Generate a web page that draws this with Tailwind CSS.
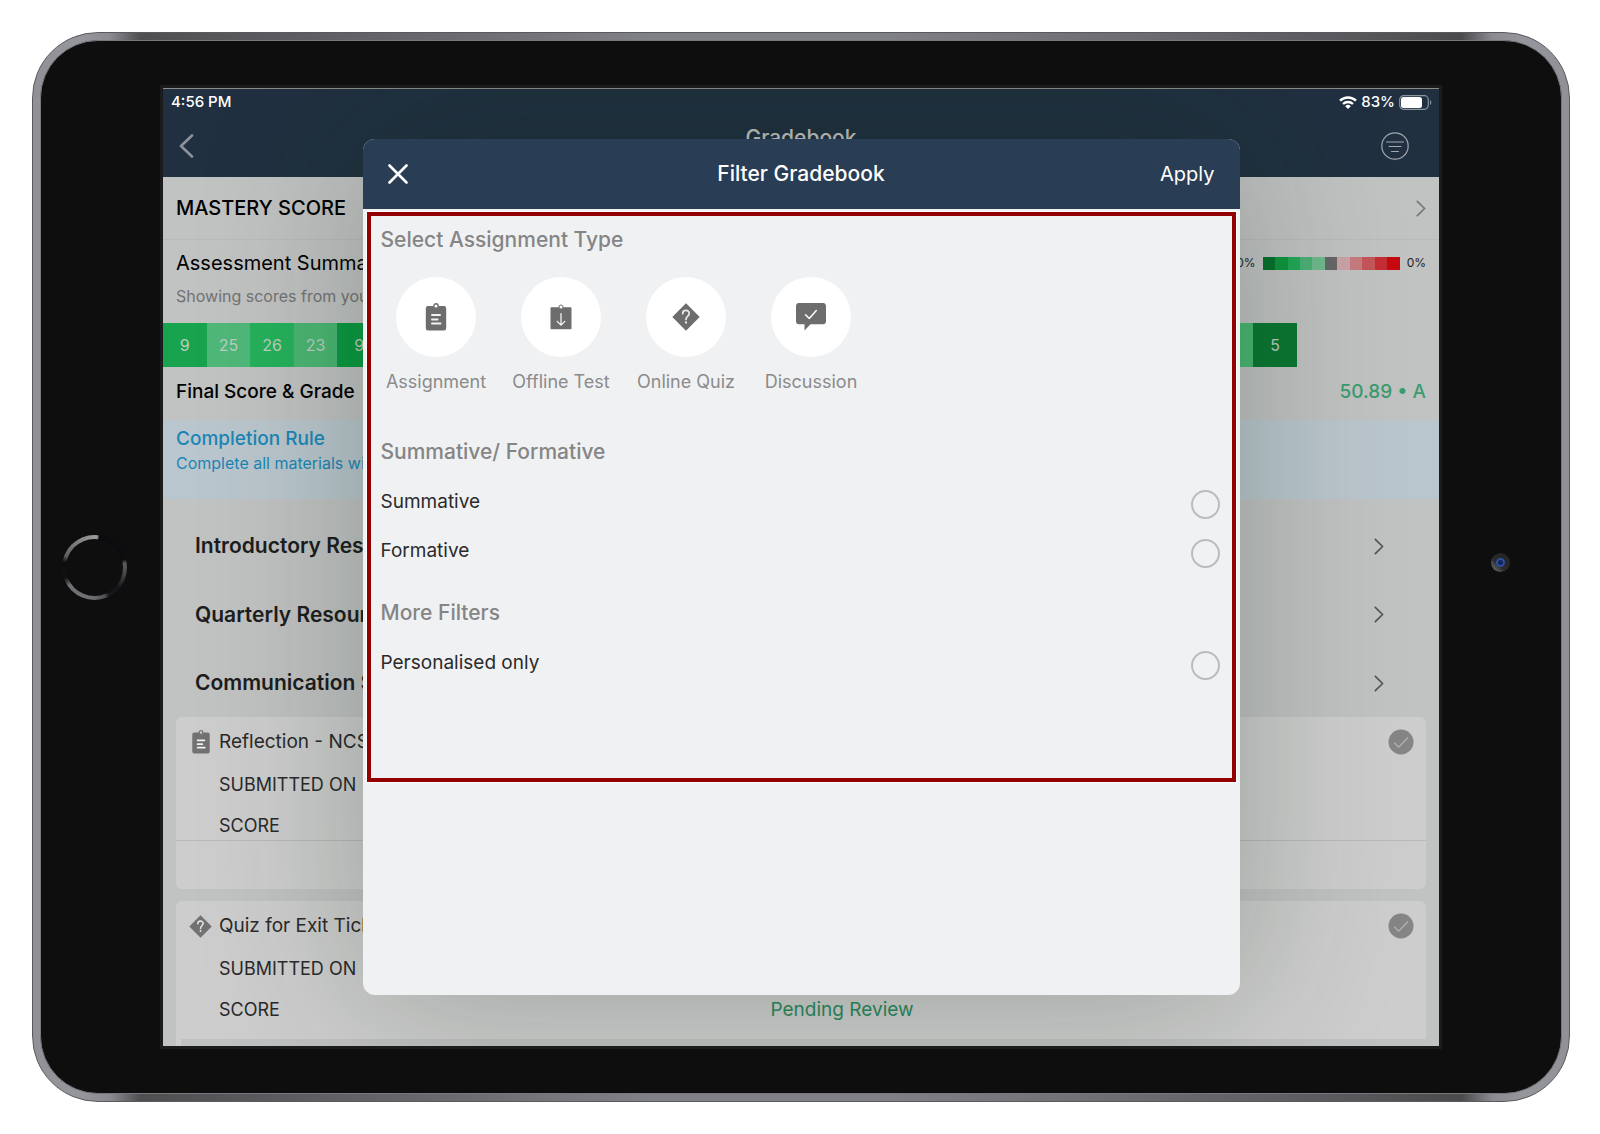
<!DOCTYPE html>
<html lang="en">
<head>
    <meta charset="UTF-8">
    <meta name="viewport" content="width=device-width, initial-scale=1.0">
    <title>Filter Gradebook</title>
    <script src="https://cdn.jsdelivr.net/npm/@tailwindcss/browser@4"></script>
</head>
<body class="bg-white font-[Inter,'Liberation_Sans',sans-serif]">
    <!-- Shared icons -->
    <svg class="hidden" xmlns="http://www.w3.org/2000/svg">
        <symbol id="icon-clipboard" viewBox="0 0 21 28">
            <circle cx="10.5" cy="3" r="2.2" fill="none" stroke="currentColor" stroke-width="1.4"/>
            <path fill="currentColor" fill-rule="evenodd" d="M2.500 3h5.500a2.500 2.500 0 0 0 5 0h5.500a2.200 2.200 0 0 1 2.200 2.200v20a2.200 2.200 0 0 1-2.200 2.200h-16A2.200 2.200 0 0 1 .3 25.200v-20A2.200 2.200 0 0 1 2.500 3Z"/>
            <path fill="none" stroke="#fff" stroke-opacity=".9" stroke-width="2" stroke-linecap="round" d="M6.500 12h8M6.500 16.500h5.500M6.500 20.500h8.500"/>
        </symbol>
        <symbol id="icon-offline" viewBox="0 0 21 28">
            <circle cx="10.5" cy="4" r="2" fill="none" stroke="currentColor" stroke-width="1"/>
            <path fill="currentColor" d="M1 4.300h7.500a2 2 0 0 0 4 0H20a1 1 0 0 1 1 1V25.300a1 1 0 0 1-1 1H1a1 1 0 0 1-1-1V5.300a1 1 0 0 1 1-1Z"/>
            <path fill="none" stroke="#fff" stroke-width="1.2" stroke-linecap="round" stroke-linejoin="round" d="M10.500 10.500v11.500M6.700 18.300l3.800 3.800 3.800-3.800"/>
        </symbol>
        <symbol id="icon-quiz" viewBox="0 0 27 27">
            <path fill="currentColor" d="M13.500.3 26.700 13.500 13.500 26.700.3 13.500Z"/>
            <path fill="none" stroke="#fff" stroke-opacity=".85" stroke-width="1.700" stroke-linecap="round" d="M10.300 10.300c0-4.200 6.300-4.200 6.300-.2 0 2.600-3.100 2.500-3.100 5.700"/>
            <circle cx="13.500" cy="18.800" r="1.100" fill="#fff" fill-opacity=".85"/>
        </symbol>
        <symbol id="icon-discussion" viewBox="0 0 30 28">
            <path fill="currentColor" d="M3.500 0h23A3.300 3.300 0 0 1 30 3.300v14.700a3.300 3.300 0 0 1-3.500 3.300H14.500L8.500 27.500v-6.200H3.500A3.300 3.300 0 0 1 0 18V3.300A3.300 3.300 0 0 1 3.500 0Z"/>
            <path fill="none" stroke="#fff" stroke-width="1.500" stroke-linecap="round" stroke-linejoin="round" d="m9.500 11.700 3.800 3.800 7-8"/>
        </symbol>
        <symbol id="icon-chevron" viewBox="0 0 10 17">
            <path fill="none" stroke="currentColor" stroke-width="1.700" stroke-linecap="round" stroke-linejoin="round" d="m1.300 1.300 7.300 7.200-7.300 7.200"/>
        </symbol>
        <symbol id="icon-done" viewBox="0 0 26 26">
            <circle cx="13" cy="13" r="12.500" fill="#858585"/>
            <path fill="none" stroke="#b5b5b5" stroke-width="1.200" stroke-linecap="round" stroke-linejoin="round" d="m6.500 14 4.200 4.200L19.500 9"/>
        </symbol>
    </svg>

    <div class="min-h-screen pt-8 pb-8 pl-8 pr-[30px]">
        <!-- Tablet frame -->
        <div class="rounded-[66px] border border-[#5a5a5e] bg-[linear-gradient(90deg,#909097_0%,#96969d_3%,#8a8a90_5%,#4f4f52_7%,#5a5a5e_15%,#6c6c70_28%,#808087_40%,#808087_55%,#6c6c70_72%,#5a5a5e_85%,#4b4b4d_93%,#8a8a90_95%,#96969d_97%,#909097_100%)] p-[7px]">
            <div class="grid grid-cols-[122px_minmax(0,1fr)_122px] items-center rounded-[58px] border border-[#77777c] bg-[#0e0e0e] pt-[47px] pb-[47px]">
                <!-- Home button -->
                <div class="ml-[21px] flex size-[65px] items-center justify-center rounded-full bg-[conic-gradient(#999_0deg,#999_5deg,#0b0b10_9deg,#0b0b10_75deg,#5c5c60_82deg,#4a4a4e_100deg,#15151a_130deg,#15151a_152deg,#505054_160deg,#707074_185deg,#707074_235deg,#111_250deg,#0e0e0e_280deg,#606064_292deg,#8c8c8c_340deg,#999_360deg)]">
                    <div class="size-[57px] rounded-full bg-[#0e0e0e]"></div>
                </div>

                <!-- Screen -->
                <div class="relative overflow-hidden bg-[#c1c2c2] ring-3 ring-[#1b1b1c]">
                    <header class="border-t border-[#8b8b88] bg-[#203040] text-white">
                        <div class="flex h-[26px] items-center justify-between pl-2 pr-[7px] text-[15px] leading-5 font-medium">
                            <span>4:56 PM</span>
                            <div class="flex items-center gap-1">
                                <svg class="h-[13px] w-[18px]" viewBox="0 0 18 13" fill="none" stroke="#fff" stroke-width="2.400">
                                    <path d="M1 4.700a11.500 11.500 0 0 1 16 0M4 8a7.300 7.300 0 0 1 10 0"/>
                                    <path fill="#fff" stroke="none" d="M9 13 6.200 10.200a4 4 0 0 1 5.600 0Z"/>
                                </svg>
                                <span>83%</span>
                                <svg class="h-[15px] w-[33px]" viewBox="0 0 33 15">
                                    <rect x=".7" y=".7" width="28.600" height="13.600" rx="4" fill="none" stroke="#8b95a0" stroke-width="1.200"/>
                                    <rect x="2" y="2" width="21" height="11" rx="2.500" fill="#fff"/>
                                    <path fill="#8b95a0" d="M31 5c1.700.8 1.700 4.200 0 5Z"/>
                                </svg>
                            </div>
                        </div>
                        <div class="grid h-[62px] grid-cols-3 items-center pl-[15px] pr-[30px]">
                            <button aria-label="Back" class="justify-self-start text-[#8b929b]">
                                <svg class="block h-6 w-[17px]" viewBox="0 0 17 24"><path fill="none" stroke="currentColor" stroke-width="2.600" stroke-linecap="round" stroke-linejoin="round" d="M14 1.500 3 12l11 10.500"/></svg>
                            </button>
                            <h1 class="pb-4 pl-[15px] text-center text-[21px] leading-6 font-medium text-[#c3c3c3]">Gradebook</h1>
                            <button aria-label="Filter" class="justify-self-end text-[#a3a8ad]">
                                <svg class="block size-7" viewBox="0 0 28 28" fill="none" stroke="currentColor" stroke-width="1.200" stroke-linecap="round"><circle cx="14" cy="14" r="13.200"/><path d="M5.500 10h17M8 14.500h12M10.500 19.500h7"/></svg>
                            </button>
                        </div>
                    </header>

                    <main class="text-black">
                        <a href="#" class="flex h-[63px] items-center justify-between border-b border-[#b9babb] px-[13px] text-[20px] leading-6 font-medium">
                            MASTERY SCORE
                            <svg class="h-[17px] w-[10px] text-[#777]"><use href="#icon-chevron"/></svg>
                        </a>

                        <section>
                            <div class="px-[13px] pt-[11px] pb-[15px]">
                                <div class="flex h-6 items-center justify-between">
                                    <h2 class="text-[20px] leading-6">Assessment Summary</h2>
                                    <div class="flex items-center gap-[7px] text-[12px] leading-4 text-[#1f1f1f]">
                                        <span>100%</span>
                                        <div id="legend" class="flex h-[13px] w-[137px]"></div>
                                        <span>0%</span>
                                    </div>
                                </div>
                                <p class="mt-[9px] text-[16px] leading-6 text-[#737373]">Showing scores from your classes</p>
                            </div>
                            <div id="scores" class="mr-[142px] flex h-11 text-[16px] leading-6 text-[#bccdc0]"></div>
                            <div class="flex h-[53px] items-center justify-between px-[13px] pb-1 text-[19px] leading-6 font-medium">
                                <h3>Final Score &amp; Grade</h3>
                                <span class="text-[#3b9c70]">50.89 • A</span>
                            </div>
                        </section>

                        <section class="h-[79px] bg-[#bac6cd] px-[13px] pt-[7px] text-[#1b86b6]">
                            <h3 class="text-[19px] leading-6 font-medium">Completion Rule</h3>
                            <p class="text-[16px] leading-6">Complete all materials within this course</p>
                        </section>

                        <nav class="pt-[13px] text-[21px] leading-6 font-semibold text-[#1d1d1d]">
                            <a href="#" class="flex h-[68px] items-center justify-between pl-8 pr-[55px]">Introductory Resources <svg class="h-[17px] w-[10px] text-[#555]"><use href="#icon-chevron"/></svg></a>
                            <a href="#" class="flex h-[69px] items-center justify-between pl-8 pr-[55px]">Quarterly Resources <svg class="h-[17px] w-[10px] text-[#555]"><use href="#icon-chevron"/></svg></a>
                            <a href="#" class="flex h-[68px] items-center justify-between pl-8 pr-[55px]">Communication Skills <svg class="h-[17px] w-[10px] text-[#555]"><use href="#icon-chevron"/></svg></a>
                        </nav>

                        <div class="flex flex-col gap-3 px-[13px] text-[#2a2a2a]">
                            <article class="rounded-md bg-[#cdcdcd]">
                                <div class="flex h-[50px] items-center pl-4 pr-3">
                                    <svg class="h-[24px] w-[18px] text-[#727272]"><use href="#icon-clipboard"/></svg>
                                    <h4 class="ml-[9px] flex-1 text-[19px] leading-6">Reflection - NCSS</h4>
                                    <svg class="size-[26px]"><use href="#icon-done"/></svg>
                                </div>
                                <div class="flex flex-col gap-[17px] border-b border-[#b8b9b8] pt-1.5 pb-0.5 pl-[43px] text-[18px] leading-6">
                                    <p>SUBMITTED ON</p>
                                    <p>SCORE</p>
                                </div>
                                <div class="h-12"></div>
                            </article>
                            <article class="rounded-t-md bg-[#cdcdcd]">
                                <div class="flex h-[50px] items-center pl-[13px] pr-3">
                                    <svg class="size-[23px] text-[#727272]"><use href="#icon-quiz"/></svg>
                                    <h4 class="ml-[7px] flex-1 text-[19px] leading-6">Quiz for Exit Ticket</h4>
                                    <svg class="size-[26px]"><use href="#icon-done"/></svg>
                                </div>
                                <div class="grid grid-cols-2 gap-y-[17px] pt-1.5 pb-[17px] pl-[43px] text-[18px] leading-6">
                                    <p class="col-span-2">SUBMITTED ON</p>
                                    <p>SCORE</p>
                                    <p class="-ml-[52px] text-[19px] text-[#2b885c]">Pending Review</p>
                                </div>
                                <div class="ml-[5px] h-[7px] bg-[#c0c1c1]"></div>
                            </article>
                        </div>
                    </main>

                    <!-- Filter dialog -->
                    <div role="dialog" aria-labelledby="filterTitle" class="absolute inset-x-0 inset-y-[51px] mx-auto w-full max-w-[877px] overflow-hidden rounded-xl bg-[#f0f1f3] shadow-[0_0_160px_rgba(15,40,20,0.28)]">
                        <header class="grid h-[70px] grid-cols-[1fr_auto_1fr] items-center bg-[#293d54] px-[25px] text-white">
                            <button aria-label="Close" class="justify-self-start">
                                <svg class="block size-5" viewBox="0 0 20 20"><path fill="none" stroke="#fff" stroke-width="2.600" stroke-linecap="round" d="m1.500 1.500 17 17M18.500 1.500l-17 17"/></svg>
                            </button>
                            <h2 id="filterTitle" class="text-[21px] leading-6 font-medium">Filter Gradebook</h2>
                            <button class="justify-self-end text-[20px] leading-6">Apply</button>
                        </header>
                        <form class="mx-[4px] mt-[3px] border-4 border-[#920000] pr-3 pl-[10px] pb-[91px] outline outline-white">
                            <fieldset>
                                <legend class="flex h-12 items-center text-[21px] leading-6 font-medium text-[#858585]">Select Assignment Type</legend>
                                <div id="types" class="-ml-[7px] flex pt-[13px]"></div>
                            </fieldset>
                            <fieldset class="mt-[31px]">
                                <legend class="flex h-[50px] items-center text-[21px] leading-6 font-medium text-[#858585]">Summative/ Formative</legend>
                                <label class="flex h-[49px] items-center justify-between text-[19px] leading-6 text-[#2b2b2b]">Summative <input type="radio" name="kind" value="summative" class="mt-1.5 size-[29px] appearance-none rounded-full border-2 border-[#bcbcbe] checked:border-8 checked:border-[#293d54]"></label>
                                <label class="flex h-[49px] items-center justify-between text-[19px] leading-6 text-[#2b2b2b]">Formative <input type="radio" name="kind" value="formative" class="mt-1.5 size-[29px] appearance-none rounded-full border-2 border-[#bcbcbe] checked:border-8 checked:border-[#293d54]"></label>
                            </fieldset>
                            <fieldset class="mt-[13px]">
                                <legend class="flex h-[50px] items-center text-[21px] leading-6 font-medium text-[#858585]">More Filters</legend>
                                <label class="flex h-[49px] items-center justify-between text-[19px] leading-6 text-[#2b2b2b]">Personalised only <input type="checkbox" name="personalised" class="mt-1.5 size-[29px] appearance-none rounded-full border-2 border-[#bcbcbe] checked:border-8 checked:border-[#293d54]"></label>
                            </fieldset>
                        </form>
                    </div>
                </div>

                <!-- Camera -->
                <div class="mb-2.5 flex size-[19px] items-center justify-center justify-self-center rounded-full bg-[linear-gradient(45deg,#777_5%,#2a2a2a_40%,#222_100%)]">
                    <div class="size-[9px] rounded-full border-2 border-[#2c4f9e] bg-[#12245c]"></div>
                </div>
            </div>
        </div>
    </div>
</body>
</html>

<script>
    const legendColors = [
        'bg-[#07712c]', 'bg-[#0e953e]', 'bg-[#22a856]', 'bg-[#4bb074]', 'bg-[#6fb98b]', 'bg-[#666666]',
        'bg-[#c9a3a5]', 'bg-[#c77c7f]', 'bg-[#c5565a]', 'bg-[#c32e33]', 'bg-[#c60a10]'
    ];

    const scoreColors = ['bg-[#18a34e]', 'bg-[#4fb879]', 'bg-[#26b15c]', 'bg-[#4bb673]', 'bg-[#0b9a41]'];
    const scores = [9, 25, 26, 23, 9, 12, 25, 26, 23, 9, 14, 25, 26, 23, 9, 11, 25, 26, 23, 9, 16, 25, 26, 23, 18];

    const types = [
        { value: 'assignment', label: 'Assignment',   icon: 'icon-clipboard' },
        { value: 'offline',    label: 'Offline Test', icon: 'icon-offline' },
        { value: 'quiz',       label: 'Online Quiz',  icon: 'icon-quiz' },
        { value: 'discussion', label: 'Discussion',   icon: 'icon-discussion' }
    ];

    document.getElementById('legend').innerHTML = legendColors
        .map(color => `<span class="flex-1 ${color}"></span>`).join('');

    document.getElementById('scores').innerHTML = scores.map((score, i) => `
        <span class="flex flex-1 items-center justify-center ${i === 24 ? 'bg-[#4bb673]' : scoreColors[i % 5]}">${score}</span>
    `).join('') + '<span class="flex flex-1 items-center justify-center bg-[#0a7732]">5</span>';

    document.getElementById('types').innerHTML = types.map(type => `
        <label class="flex w-[125px] cursor-pointer flex-col items-center text-[18px] leading-7 text-[#8b8b8b]">
            <input type="checkbox" name="type" value="${type.value}" class="peer sr-only">
            <span class="mb-[11px] flex size-20 items-center justify-center rounded-full bg-white text-[#6d6d6d] peer-checked:ring-2 peer-checked:ring-[#293d54]">
                <svg class="h-7 w-[30px]"><use href="#${type.icon}"/></svg>
            </span>
            ${type.label}
        </label>
    `).join('');
</script>
